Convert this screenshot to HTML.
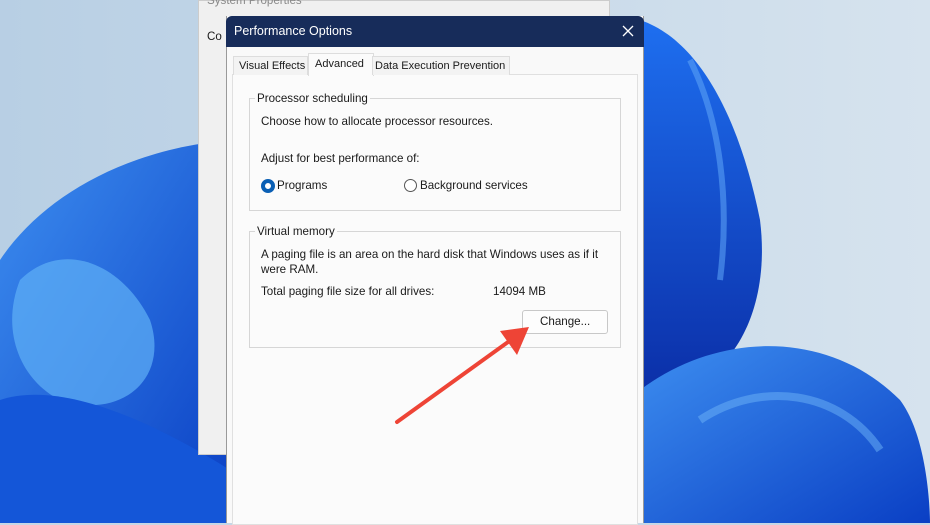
<!DOCTYPE html>
<html><head><style>
body{margin:0;width:930px;height:523px;overflow:hidden;position:relative;font-family:"Liberation Sans",sans-serif;background:#c6d7e6}
.abs{position:absolute}
.t{position:absolute;font-size:11.6px;color:#1a1a1a;white-space:nowrap}
.tab{font-size:11px}
</style></head><body>
<svg class="abs" style="left:0;top:0" width="930" height="523">
<defs>
<linearGradient id="g1" x1="0" y1="0" x2="1" y2="1"><stop offset="0" stop-color="#3d8ef0"/><stop offset="1" stop-color="#0a3fc4"/></linearGradient>
<linearGradient id="g2" x1="0" y1="0" x2="0" y2="1"><stop offset="0" stop-color="#1e6ff0"/><stop offset="1" stop-color="#0b2fa8"/></linearGradient>
<linearGradient id="bg" x1="0" y1="0" x2="1" y2="0"><stop offset="0" stop-color="#b8cfe4"/><stop offset="1" stop-color="#d6e3ee"/></linearGradient>
</defs>
<rect width="930" height="523" fill="url(#bg)"/>
<path d="M0 260 C40 200 120 150 230 140 L230 523 L0 523 Z" fill="url(#g1)"/>
<path d="M20 280 C60 240 120 260 150 320 C170 380 120 420 60 400 C20 380 0 330 20 280Z" fill="#5fb0f7" opacity=".7"/>
<path d="M0 400 C60 380 150 420 230 470 L230 523 L0 523Z" fill="#1456d8"/>
<path d="M640 20 C700 40 740 120 760 220 C770 300 740 360 700 380 L640 390 Z" fill="url(#g2)"/>
<path d="M690 60 C720 120 730 200 720 280" stroke="#5aa0f5" stroke-width="6" fill="none" opacity=".6"/>
<path d="M640 390 C720 330 830 330 900 400 C930 440 930 523 930 523 L640 523Z" fill="url(#g1)"/>
<path d="M700 420 C760 380 840 390 880 450" stroke="#6db4f8" stroke-width="8" fill="none" opacity=".5"/>
</svg>
<div class="abs" style="left:198px;top:0;width:410px;height:453px;background:#f0f0f0;border:1px solid #ccc"></div>
<div class="t" style="left:207px;top:-6px;color:#888">System Properties</div>
<div class="t" style="left:207px;top:30px">Co</div>
<div class="abs" style="left:226px;top:16px;width:416px;height:507px;background:#f9f9f9;border-left:1px solid #999;border-right:1px solid #999"></div>
<div class="abs" style="left:226px;top:16px;width:418px;height:31px;background:#172c5a;border-radius:6px 6px 0 0"></div>
<div class="t" style="left:234px;top:24px;color:#fff;font-size:12.5px">Performance Options</div>
<svg class="abs" style="left:622px;top:25px" width="12" height="12"><path d="M1 1L11 11M11 1L1 11" stroke="#fff" stroke-width="1.3"/></svg>
<div class="abs" style="left:232px;top:74px;width:404px;height:449px;background:#fbfbfb;border:1px solid #e0e0e0"></div>
<div class="abs" style="left:233px;top:56px;width:73px;height:18px;border:1px solid #ddd;border-bottom:none;background:#f3f3f3"></div>
<div class="t tab" style="left:239px;top:60px">Visual Effects</div>
<div class="abs" style="left:308px;top:53px;width:64px;height:22px;border:1px solid #ddd;border-bottom:none;background:#fbfbfb"></div>
<div class="t tab" style="left:315px;top:58px">Advanced</div>
<div class="abs" style="left:372px;top:56px;width:136px;height:18px;border:1px solid #ddd;border-bottom:none;background:#f3f3f3"></div>
<div class="t tab" style="left:375px;top:60px">Data Execution Prevention</div>
<div class="abs" style="left:249px;top:98px;width:370px;height:111px;border:1px solid #d6d6d6"></div>
<div class="t" style="left:255px;top:92px;background:#fbfbfb;padding:0 2px">Processor scheduling</div>
<div class="t" style="left:261px;top:115px">Choose how to allocate processor resources.</div>
<div class="t" style="left:261px;top:152px">Adjust for best performance of:</div>
<div class="abs" style="left:261px;top:179px;width:6px;height:6px;border:4px solid #0a5fb4;border-radius:50%;background:#fff"></div>
<div class="t" style="left:277px;top:179px">Programs</div>
<div class="abs" style="left:404px;top:179px;width:11px;height:11px;border:1px solid #555;border-radius:50%;background:#fff"></div>
<div class="t" style="left:420px;top:179px">Background services</div>
<div class="abs" style="left:249px;top:231px;width:370px;height:115px;border:1px solid #d6d6d6"></div>
<div class="t" style="left:255px;top:225px;background:#fbfbfb;padding:0 2px">Virtual memory</div>
<div class="t" style="left:261px;top:248px">A paging file is an area on the hard disk that Windows uses as if it</div>
<div class="t" style="left:261px;top:263px">were RAM.</div>
<div class="t" style="left:261px;top:285px">Total paging file size for all drives:</div>
<div class="t" style="left:493px;top:285px">14094 MB</div>
<div class="abs" style="left:522px;top:310px;width:84px;height:22px;border:1px solid #c8c8c8;border-radius:3px;background:#fdfdfd"></div>
<div class="t" style="left:540px;top:315px">Change...</div>
<svg class="abs" style="left:0;top:0" width="930" height="523"><path d="M397 422L515 337" stroke="#ee4436" stroke-width="4" stroke-linecap="round"/><path d="M529 327L500 331L517 355Z" fill="#ee4436"/></svg>
</body></html>
